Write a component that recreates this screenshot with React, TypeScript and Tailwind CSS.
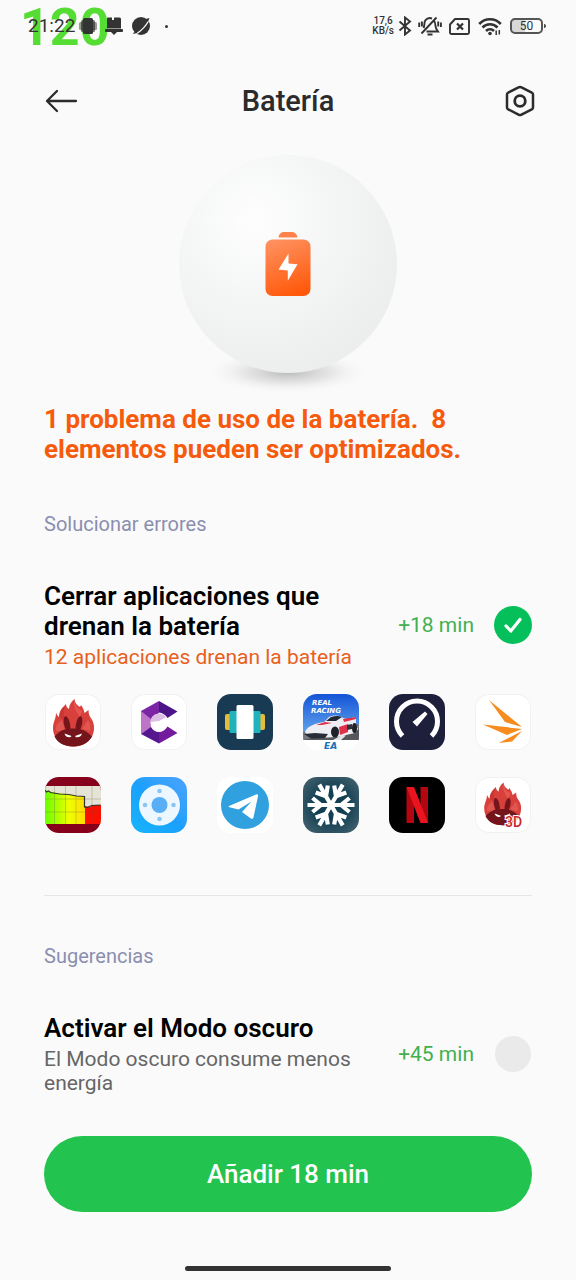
import { useState } from 'react'
import type { ReactNode } from 'react'

function StatusBar() {
  return (
    <div className="relative flex h-[52px] items-center justify-between pl-7 pr-[30px] text-[#333]">
      <span className="absolute left-5 top-0 text-[52px] leading-[56px] font-bold text-[#55dd33]">120</span>
      <div className="relative flex items-center gap-1">
        <span className="text-[19px] leading-6">21:22</span>
        <svg width="18" height="18" viewBox="0 0 18 18" fill="currentColor" aria-hidden="true">
          <rect x="4" y="1" width="10" height="16" rx="1.500" />
          <rect x="2" y="3" width="14" height="12" rx="1.500" opacity=".7" />
          <rect x="0" y="5" width="18" height="8" rx="1.500" opacity=".5" />
        </svg>
        <svg className="ml-1" width="18" height="18" viewBox="0 0 18 18" fill="currentColor" aria-hidden="true">
          <path d="M3 .5h4V3h2V.5h5.500A1.500 1.500 0 0 1 16 2v9.500H2V1.500a1 1 0 0 1 1-1z" />
          <rect x="0" y="12" width="18" height="3" rx="1" />
          <path d="M6 15h6l-3 3z" />
        </svg>
        <svg className="ml-1" width="20" height="20" viewBox="0 0 20 20" aria-hidden="true">
          <circle cx="10" cy="10" r="9" fill="currentColor" />
          <path d="M5 18C10 15 15.500 9 18 4" stroke="#fafafa" strokeWidth="1.300" fill="none" />
          <path d="M1.500 18l3-3 2 2zM18.500 2l-4 1 2.500 3z" fill="currentColor" />
        </svg>
        <span className="ml-[10px] h-[3px] w-[3px] rounded-full bg-[#333]" />
      </div>

      <div className="flex items-center">
        <div className="text-center text-[10px] leading-[10px] font-medium">
          <p>17,6</p>
          <p>KB/s</p>
        </div>
        <svg className="ml-1" width="14" height="20" viewBox="0 0 14 20" fill="none" stroke="currentColor" strokeWidth="1.900" aria-hidden="true">
          <path d="M1.500 5.500l10.500 9L7 18.500v-17l5 4-10.500 9" />
        </svg>
        <svg className="ml-[6px]" width="24" height="22" viewBox="0 0 24 22" fill="none" stroke="currentColor" strokeWidth="1.900" aria-hidden="true">
          <path d="M3.500 18.500L18.500 2.500M16 6c1.500 1.300 1.500 3 1.500 5 0 2 1 3.500 2.500 5.500H8.500M5.500 13c1.500-3 .2-5.500 2-7.800C9 3.300 11.500 2.600 14 3.500" />
          <path d="M9.500 19.500h5M1.200 7.500v4.500M3.900 6.500v5M20.200 6.500v5M22.900 7.500v4.500" />
        </svg>
        <svg className="ml-[7px]" width="21" height="17" viewBox="0 0 21 17" fill="none" stroke="currentColor" strokeWidth="1.900" aria-hidden="true">
          <path d="M6 1h12.500A1.500 1.500 0 0 1 20 2.500v12a1.500 1.500 0 0 1-1.500 1.500h-16A1.500 1.500 0 0 1 1 14.500V6.500z" strokeLinejoin="round" />
          <path d="M8 5.500l6 6M14 5.500l-6 6" strokeWidth="2.200" />
        </svg>
        <svg className="ml-2" width="24" height="19" viewBox="0 0 24 19" fill="none" stroke="currentColor" strokeWidth="2.600" aria-hidden="true">
          <path d="M1.200 7C7 .7 17 .7 22.800 7M4.500 10.500c4-4.300 11-4.300 15 0M8 14c2.300-2.400 5.700-2.400 8 0" />
          <circle cx="12" cy="16.500" r="1.800" fill="currentColor" stroke="none" />
          <path d="M18.200 13.500v4.500M21.300 13v4.500" strokeWidth="1.500" />
        </svg>
        <div className="ml-2 flex items-center gap-px">
          <div className="flex h-4 w-[33px] items-center justify-center rounded-[5px] border-2 border-[#555] bg-linear-to-r from-[#d8d8d8] from-45% to-transparent to-45% text-xs leading-3">
            50
          </div>
          <span className="h-1 w-[2px] rounded-r bg-[#444]" />
        </div>
      </div>
    </div>
  )
}

function Header() {
  return (
    <header className="flex h-[98px] items-center justify-between px-[39px] text-[#2b2b2b]">
      <button type="button" aria-label="Atrás" className="flex w-10 justify-end">
        <svg width="34" height="24" viewBox="0 0 34 24" fill="none" stroke="currentColor" strokeWidth="2.300" strokeLinecap="round" strokeLinejoin="round">
          <path d="M12 2L2 12l10 10M2 12h29" />
        </svg>
      </button>
      <h1 className="text-[29px] leading-9 font-medium">Batería</h1>
      <button type="button" aria-label="Ajustes" className="flex w-10 justify-end">
        <svg width="34" height="34" viewBox="0 0 34 34" fill="none" stroke="currentColor" strokeWidth="2.500" strokeLinejoin="round">
          <path d="M15.500 3.400a3 3 0 0 1 3 0l10.300 5.200a2 2 0 0 1 1.200 1.900v12.900a2 2 0 0 1-1.200 1.900l-10.300 5.300a3 3 0 0 1-3 0L5.200 25.300A2 2 0 0 1 4 23.400V10.500a2 2 0 0 1 1.200-1.900z" />
          <circle cx="17" cy="17" r="5.300" strokeWidth="2.800" />
        </svg>
      </button>
    </header>
  )
}

function BatterySphere() {
  return (
    <svg className="mx-auto block" width="256" height="254" viewBox="0 0 256 254" aria-hidden="true">
      <defs>
        <radialGradient id="sphere" cx=".35" cy=".3" r=".75">
          <stop offset="0" stopColor="#fefefe" />
          <stop offset=".5" stopColor="#f4f5f5" />
          <stop offset="1" stopColor="#ebeeed" />
        </radialGradient>
        <radialGradient id="shadow">
          <stop offset="0" stopColor="#a8a8a8" stopOpacity=".8" />
          <stop offset=".5" stopColor="#c4c4c4" stopOpacity=".4" />
          <stop offset="1" stopColor="#fafafa" stopOpacity="0" />
        </radialGradient>
        <linearGradient id="battery" x1=".2" y1="0" x2=".5" y2="1">
          <stop offset="0" stopColor="#ff9160" />
          <stop offset="1" stopColor="#ff5a0c" />
        </linearGradient>
      </defs>
      <ellipse cx="128" cy="222" rx="84" ry="22" fill="url(#shadow)" />
      <circle cx="128" cy="114" r="109" fill="url(#sphere)" />
      <path d="M118.500 87.500c.3-3.500 2.500-5.500 6-5.500h7c3.500 0 5.500 2 6 5.500z" fill="#ff824a" />
      <rect x="105.500" y="89.500" width="45" height="56.500" rx="7" fill="url(#battery)" />
      <path d="M128.500 103.500v10l9 .8-9.700 16.500v-10.200l-9.300-1.100z" fill="#fff" />
    </svg>
  )
}

function AppIcon({ name, className, children }: { name: string; className: string; children: ReactNode }) {
  return (
    <li className={`h-14 w-14 overflow-hidden rounded-[14px] ${className}`}>
      <svg className="block h-full w-full" viewBox="0 0 56 56" role="img" aria-label={name}>
        {children}
      </svg>
    </li>
  )
}

function Flame() {
  return (
    <>
      <path d="M11 19c1 1 1 3 3 4 0-6 3-9 7-13 0 2 1 4 3 5 0-4 2-7 5.500-10 .5 4 2 6 5.500 8l1-2c2 3 3 5 3.500 8l4-3c0 4 1 6 3 9 2 3 2.500 6 2.500 9 0 11-9 18.500-20.500 18.500S8 45 8 34c0-6 3-9 3-15z" fill="#d8403b" />
      <path d="M29.500 6c-2 7 2 11 5 17l3-6c-5-2.500-7.500-5-8-11z" fill="#e55651" />
      <path d="M21 11c-4 7-2 11-1 16l-5-4c0-6 2-9 6-12z" fill="#c93533" />
      <path d="M11 37c-1-5 2-8 6-11l3 11zM45 37c1-5 0-8-2-11l-6 9z" fill="#e05751" />
      <ellipse cx="22" cy="30" rx="3" ry="8" transform="rotate(-12 22 30)" fill="#74141b" />
      <ellipse cx="34" cy="30" rx="3" ry="8" transform="rotate(12 34 30)" fill="#74141b" />
      <path d="M9.500 42.500C14 37 20 34 28 34.500c8-.5 14 2.500 19 8C43.500 49 36.500 52.500 28 52.500S12.500 49 9.500 42.500z" fill="#74141b" />
      <path d="M19.500 39.500l7 2.500c-1 2.500-6 1.500-7-2.500zM37 39.500L30 42c1 2.500 6 1.500 7-2.500z" fill="#fff" />
    </>
  )
}

function AppGrid() {
  const white = 'bg-white ring-1 ring-[#f1f1f1] ring-inset'
  return (
    <ul className="mt-[25px] grid grid-cols-[repeat(6,56px)] justify-between gap-y-[27px] px-px">
      <AppIcon name="AnTuTu Benchmark" className={white}>
        <Flame />
      </AppIcon>
      <AppIcon name="Geekbench Compute" className={white}>
        <path d="M10 17L28 7v11.500l-8 9.500H10z" fill="#7b25a5" />
        <path d="M28 7l18.500 10.500-10 6.500c-2-3.500-5-5-8.500-5.500z" fill="#4b1588" />
        <path d="M10 17l10 8v9l-10 6z" fill="#bd75c7" />
        <path d="M10 40l10-7c2 3.500 4.500 5 8 5v11.500z" fill="#571790" />
        <path d="M28 38c3.500 0 6.500-2 8.500-5.500l10 6.500L28 49.500z" fill="#731b9c" />
        <circle cx="28" cy="28.500" r="8.500" fill="#fff" />
        <path d="M19.500 28c0-5 4-8.500 8.500-8.500 3 0 5.500 1.500 7 3.700L28 27z" fill="#dcbee5" />
      </AppIcon>
      <AppIcon name="Widgets" className="bg-[#183a52]">
        <rect x="8" y="20" width="40" height="16" rx="2" fill="#e5bb3b" />
        <rect x="12.500" y="17" width="31" height="22" rx="1.500" fill="#20b2bd" />
        <rect x="19.500" y="11" width="17" height="34" rx="1.500" fill="#fff" />
      </AppIcon>
      <AppIcon name="Real Racing 3" className="bg-white">
        <defs>
          <linearGradient id="sky" x1="0" y1="0" x2="0" y2="1">
            <stop offset="0" stopColor="#1454d6" />
            <stop offset="1" stopColor="#6fb1f2" />
          </linearGradient>
        </defs>
        <rect width="56" height="46" fill="url(#sky)" />
        <path d="M0 38l20-3 36-5v16H0z" fill="#77797c" />
        <path d="M0 46l56-11v11z" fill="#55575a" />
        <path d="M30 46l9-5 4 .5-5 4.500z" fill="#e4e4e4" />
        <path d="M2 38c2-6 11-9 19-10l5-5c5-2 10-2 14 1l4 1 9-2v8l2 4-3 4-18 4-18 1-12-3z" fill="#eeedf2" />
        <path d="M23 27l5-4c4-1.500 8-1.500 11 0l-6 4z" fill="#202936" />
        <path d="M13 31l9-3 7 1-10 2zM40 25l13-2v2l-12 3zM36 33l9-3v8l-8 3z" fill="#e1304a" />
        <path d="M1 40l11-1 13 1-3 4-14 .5z" fill="#292d38" />
        <ellipse cx="32" cy="38" rx="4" ry="5.500" fill="#20222a" />
        <ellipse cx="51.500" cy="34" rx="2.500" ry="5" fill="#20222a" />
        <path d="M44 31l5-1v5l-5 1z" fill="#30323b" />
        <text x="9" y="11" fontSize="7" fontWeight="700" fontStyle="italic" fill="#fff" fontFamily="DejaVu Sans">REAL</text>
        <text x="8" y="19" fontSize="7" fontWeight="700" fontStyle="italic" fill="#fff" fontFamily="DejaVu Sans">RACING</text>
        <text x="21" y="55" fontSize="9" fontWeight="700" fontStyle="italic" fill="#1473b8" fontFamily="DejaVu Sans">EA</text>
      </AppIcon>
      <AppIcon name="Speedtest" className="bg-[#1d1f3b]">
        <path d="M13.500 42A20.500 20.500 0 1 1 42.500 42" fill="none" stroke="#fff" strokeWidth="5" />
        <path d="M23.500 28l12.500-10.500 2.500 2.500L28 32.500z" fill="#fff" />
      </AppIcon>
      <AppIcon name="3DMark" className={white}>
        <path d="M14 6l33 27-17-5z" fill="#f68b1f" />
        <path d="M8 30.500l39 4.500-15 6z" fill="#f68b1f" />
        <path d="M23.500 49l23.500-12-10 10.500z" fill="#f68b1f" />
      </AppIcon>
      <AppIcon name="Monitor de batería" className="bg-[#86001b]">
        <defs>
          <linearGradient id="level">
            <stop offset="0" stopColor="#68ff00" />
            <stop offset=".6" stopColor="#efff00" />
            <stop offset="1" stopColor="#ffdc00" />
          </linearGradient>
        </defs>
        <rect y="9" width="56" height="38" fill="#e5e3d5" />
        <path d="M0 13l5 1.500 10 2 9 .5 8 2h8v28H0z" fill="url(#level)" />
        <path d="M40 29l5 1 3-2h8v19H40z" fill="#fb1100" />
        <path d="M0 22h56M0 35h56M9.500 9v38M20.500 9v38M31 9v38M47 9v38" stroke="#654" strokeWidth=".6" opacity=".45" />
        <path d="M0 13l1.500 2 2-1 2 1.500 9 1.500 9 .5 8 1.500 8 .5v10.500l3 .5 4-2 9-.5" fill="none" stroke="#333" strokeWidth="1.200" />
      </AppIcon>
      <AppIcon name="Mi Remote" className="bg-linear-to-tr from-[#18b5fb] via-[#1aa0fc] to-[#4aa3fc]">
        <circle cx="28.500" cy="28" r="20.500" fill="#edf7ff" />
        <circle cx="28.500" cy="28" r="8" fill="#5aadf7" />
        <circle cx="28.500" cy="14" r="2.300" fill="#8cc5f4" />
        <circle cx="28.500" cy="42" r="2.300" fill="#8cc5f4" />
        <circle cx="14" cy="28" r="2.300" fill="#8cc5f4" />
        <circle cx="42.500" cy="28" r="2.300" fill="#8cc5f4" />
      </AppIcon>
      <AppIcon name="Telegram" className="bg-white">
        <circle cx="28" cy="28" r="24" fill="#30a1de" />
        <path d="M12 29l27-11.500c1.500-.6 2.300.3 2 1.800l-4.500 21c-.4 1.600-1.500 2-3 1L25 35l9.500-10.500-13 8-9-2.300c-1-.3-1-.9-.5-1.200z" fill="#fff" />
      </AppIcon>
      <AppIcon name="Congelador" className="bg-[radial-gradient(#123f51_40%,#4b6773)]">
        <g stroke="#fff" strokeWidth="4.200" fill="none">
          {[0, 60, 120, 180, 240, 300].map((angle) => (
            <path key={angle} transform={`rotate(${angle} 28 28)`} d="M28 28h23.500M38 28l8.500-7M38 28l8.500 7" />
          ))}
        </g>
      </AppIcon>
      <AppIcon name="Netflix" className="bg-black">
        <rect x="17.500" y="10" width="7.500" height="36" fill="#b20710" />
        <rect x="31.500" y="10" width="7.500" height="36" fill="#b20710" />
        <path d="M17.500 10H25l14 36h-7.500z" fill="#e9141d" />
      </AppIcon>
      <AppIcon name="AnTuTu 3D" className={white}>
        <g transform="translate(2 1) scale(.9)">
          <Flame />
        </g>
        <text x="30" y="50" fontSize="14" fontWeight="500" fill="#c9262b" stroke="#fff" strokeWidth="2" paintOrder="stroke" fontFamily="Roboto">3D</text>
      </AppIcon>
    </ul>
  )
}

type OptimizationProps = {
  title: string
  detail: string
  detailColor: string
  gain: string
  checked: boolean
  onChange: (checked: boolean) => void
}

function Optimization({ title, detail, detailColor, gain, checked, onChange }: OptimizationProps) {
  return (
    <label className="mt-[45px] flex items-center">
      <span className="flex-1 pr-6">
        <span className="block text-[26px] leading-[30px] font-semibold text-black">{title}</span>
        <span className={`mt-1 block text-[21px] leading-6 ${detailColor}`}>{detail}</span>
      </span>
      <span className="text-[21px] leading-6 text-[#42b050]">{gain}</span>
      <span className="relative ml-5 flex h-[38px] w-[38px] shrink-0 items-center justify-center">
        <input
          type="checkbox"
          checked={checked}
          onChange={(e) => onChange(e.target.checked)}
          className="h-9 w-9 appearance-none rounded-full bg-[#eaeaea] checked:h-[38px] checked:w-[38px] checked:bg-[#05c05a]"
        />
        {checked && (
          <svg className="pointer-events-none absolute" width="38" height="38" viewBox="0 0 38 38" fill="none" stroke="#fff" strokeWidth="3.200" strokeLinecap="round" strokeLinejoin="round" aria-hidden="true">
            <path d="M12 20l4.800 5L26 13.500" />
          </svg>
        )}
      </span>
    </label>
  )
}

export default function App() {
  const [closeApps, setCloseApps] = useState(true)
  const [darkMode, setDarkMode] = useState(false)

  return (
    <div className="flex min-h-screen flex-col bg-[#fafafa] font-[Roboto,sans-serif]">
      <StatusBar />
      <Header />

      <main className="flex flex-col px-11">
        <BatterySphere />
        <h2 className="text-[26px] leading-[30px] font-bold text-[#f65a0c]">
          1 problema de uso de la batería.&nbsp; 8 elementos pueden ser optimizados.
        </h2>

        <section className="mt-12 border-b border-[#e6e6e6] pb-[62px]">
          <h3 className="text-xl leading-6 text-[#8a8eb0]">Solucionar errores</h3>
          <Optimization
            title="Cerrar aplicaciones que drenan la batería"
            detail="12 aplicaciones drenan la batería"
            detailColor="text-[#e8601c]"
            gain="+18 min"
            checked={closeApps}
            onChange={setCloseApps}
          />
          <AppGrid />
        </section>

        <section className="mt-12">
          <h3 className="text-xl leading-6 text-[#8a8eb0]">Sugerencias</h3>
          <Optimization
            title="Activar el Modo oscuro"
            detail="El Modo oscuro consume menos energía"
            detailColor="text-[#666]"
            gain="+45 min"
            checked={darkMode}
            onChange={setDarkMode}
          />
        </section>
      </main>

      <footer className="mt-auto flex flex-col items-center px-11 pt-6 pb-[9px]">
        <button type="button" className="h-[76px] w-full rounded-full bg-[#22c34e] text-[26px] leading-8 font-medium text-white">
          Añadir 18 min
        </button>
        <span className="mt-[54px] h-[5px] w-[206px] rounded-full bg-[#333]" />
      </footer>
    </div>
  )
}
